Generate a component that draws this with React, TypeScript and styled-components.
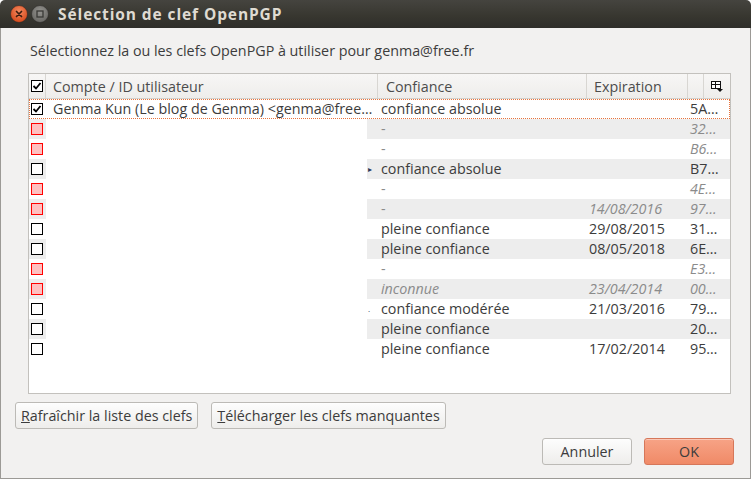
import React from 'react'
import styled, { createGlobalStyle } from 'styled-components'

const GlobalStyle = createGlobalStyle`
  html, body {
    margin: 0;
    padding: 0;
    background: #ffffff;
  }
  body {
    font-family: "Open Sans", "DejaVu Sans", sans-serif;
    font-size: 14.3px;
    color: #3c3c3c;
  }
`

const Window = styled.div`
  width: 751px;
  height: 479px;
  display: flex;
  flex-direction: column;
  border-radius: 5px 5px 0 0;
  overflow: hidden;
`

const TitleBar = styled.div`
  height: 28px;
  flex: none;
  display: flex;
  align-items: center;
  gap: 3px;
  padding-left: 10px;
  background: linear-gradient(#45443f, #37362f 60%, #2f2e2a);
`

const Title = styled.span`
  margin-left: 6px;
  font-weight: 700;
  color: #dfdbd2;
  font-size: 15.5px;
  letter-spacing: 0.9px;
`

const Content = styled.div`
  flex: 1;
  display: flex;
  flex-direction: column;
  background: #f2f1f0;
  border: 1px solid #9c9a96;
  border-top: none;
  padding: 13px 16px 13px 14px;
`

const Prompt = styled.div`
  height: 18px;
  box-sizing: border-box;
  padding-top: 1px;
  line-height: 18px;
  margin: 0 0 14px 15px;
`

const Table = styled.div`
  height: 321px;
  flex: none;
  box-sizing: border-box;
  margin: 0 3px 0 13px;
  border: 1px solid #c3c1bd;
  background: #ffffff;
  display: flex;
  flex-direction: column;
`

const HeaderRow = styled.div`
  height: 25px;
  flex: none;
  box-sizing: border-box;
  display: grid;
  grid-template-columns: 17px 332px 209px 101px 16px 1fr;
  background: linear-gradient(#f7f6f5, #eeedeb);
  border-bottom: 1px solid #d3d1cd;
  color: #4c4c4c;
`

const HeaderCell = styled.div<{ $pad?: number; $last?: boolean }>`
  display: flex;
  align-items: center;
  padding-left: ${(p) => p.$pad ?? 0}px;
  border-right: ${(p) => (p.$last ? 'none' : '1px solid #d8d6d2')};
  justify-content: ${(p) => (p.$last ? 'center' : 'flex-start')};
  white-space: nowrap;
  overflow: hidden;
`

const Row = styled.div<{ $alt: boolean; $focus?: boolean }>`
  height: 20px;
  flex: none;
  line-height: 20px;
  display: grid;
  grid-template-columns: 17px 332px 209px 101px 1fr;
  background: ${(p) => (p.$alt ? '#ededed' : '#ffffff')};
  outline: ${(p) => (p.$focus ? '1px dotted #e8733c' : 'none')};
  outline-offset: -1px;
`

const CheckCell = styled.div`
  display: flex;
  align-items: center;
  padding-left: 2px;
`

const Box = styled.div<{ $red?: boolean }>`
  width: 12px;
  height: 12px;
  box-sizing: border-box;
  border: 1px solid ${(p) => (p.$red ? '#ff0000' : '#000000')};
  background: ${(p) => (p.$red ? '#ffc0c0' : '#ffffff')};
  display: flex;
  align-items: center;
  justify-content: center;
`

const NameCell = styled.div`
  display: flex;
  white-space: nowrap;
  overflow: hidden;
`

const NameText = styled.span`
  padding-left: 7px;
  background: #ffffff;
`

const Blank = styled.div`
  width: 321px;
  flex: none;
  background: #ffffff;
`

const Mark = styled.span`
  margin-left: 1px;
  font-size: 8px;
  color: #2c3a5a;
`

const Cell = styled.div<{ $muted?: boolean; $italic?: boolean; $pad: number }>`
  padding-left: ${(p) => p.$pad}px;
  white-space: nowrap;
  overflow: hidden;
  color: ${(p) => (p.$muted ? '#8b8b8b' : '#3c3c3c')};
  font-style: ${(p) => (p.$italic ? 'italic' : 'normal')};
`

const ButtonRow = styled.div<{ $end?: boolean; $gap: number; $top: number }>`
  display: flex;
  gap: ${(p) => p.$gap}px;
  margin-top: ${(p) => p.$top}px;
  justify-content: ${(p) => (p.$end ? 'flex-end' : 'flex-start')};
`

const Button = styled.button<{ $width?: number; $primary?: boolean }>`
  height: 27px;
  ${(p) => (p.$width ? `width: ${p.$width}px;` : 'padding: 0 5px;')}
  font-family: inherit;
  font-size: 14.3px;
  color: #3c3c3c;
  border-radius: 3px;
  border: 1px solid ${(p) => (p.$primary ? '#d6775a' : '#bcbab6')};
  background: ${(p) =>
    p.$primary
      ? 'linear-gradient(#f7a386, #f08a67)'
      : 'linear-gradient(#fdfdfd, #eeedeb)'};
  box-shadow: inset 0 1px 0 rgba(255, 255, 255, 0.4);
  cursor: pointer;
`

const CloseButton = () => (
  <svg width="18" height="18" viewBox="0 0 18 18">
    <defs>
      <radialGradient id="cg" cx="50%" cy="35%" r="65%">
        <stop offset="0%" stopColor="#f58a60" />
        <stop offset="100%" stopColor="#d5481a" />
      </radialGradient>
    </defs>
    <circle cx="9" cy="9" r="8.5" fill="url(#cg)" stroke="#2a2926" strokeWidth="0.6" />
    <path d="M6.5 6.5 L11.5 11.5 M11.5 6.5 L6.5 11.5" stroke="#3b1d10" strokeWidth="1.7" strokeLinecap="round" />
  </svg>
)

const MinButton = () => (
  <svg width="18" height="18" viewBox="0 0 18 18">
    <defs>
      <radialGradient id="mg" cx="50%" cy="35%" r="65%">
        <stop offset="0%" stopColor="#94938f" />
        <stop offset="100%" stopColor="#686763" />
      </radialGradient>
    </defs>
    <circle cx="9" cy="9" r="8.5" fill="url(#mg)" stroke="#2a2926" strokeWidth="0.6" />
    <rect x="6" y="6" width="6" height="6" fill="none" stroke="#3a3936" strokeWidth="1.3" />
  </svg>
)

const Check = () => (
  <svg width="10" height="10" viewBox="0 0 10 10">
    <path d="M1.5 5 L4 7.5 L8.5 2" fill="none" stroke="#000" strokeWidth="1.8" />
  </svg>
)

const ColumnsIcon = () => (
  <svg width="12" height="11" viewBox="0 0 12 11">
    <rect x="0.5" y="0.5" width="9" height="7" fill="#fff" stroke="#111" />
    <path d="M0.5 3.5 H9.5 M4.5 0.5 V7.5" stroke="#111" />
    <path d="M6 8 H12 L9 11 Z" fill="#111" />
  </svg>
)

type Key = {
  red: boolean
  checked?: boolean
  name?: string
  mark?: string
  trust: string
  trustMuted?: boolean
  trustItalic?: boolean
  exp: string
  id: string
}

const keys: Key[] = [
  { red: false, checked: true, name: 'Genma Kun (Le blog de Genma) <genma@free…', trust: 'confiance absolue', exp: '', id: '5A…' },
  { red: true, trust: '-', trustMuted: true, exp: '', id: '32…' },
  { red: true, trust: '-', trustMuted: true, exp: '', id: 'B6…' },
  { red: false, mark: '▸', trust: 'confiance absolue', exp: '', id: 'B7…' },
  { red: true, trust: '-', trustMuted: true, exp: '', id: '4E…' },
  { red: true, trust: '-', trustMuted: true, exp: '14/08/2016', id: '97…' },
  { red: false, trust: 'pleine confiance', exp: '29/08/2015', id: '31…' },
  { red: false, trust: 'pleine confiance', exp: '08/05/2018', id: '6E…' },
  { red: true, trust: '-', trustMuted: true, exp: '', id: 'E3…' },
  { red: true, trust: 'inconnue', trustMuted: true, trustItalic: true, exp: '23/04/2014', id: '00…' },
  { red: false, mark: '.', trust: 'confiance modérée', exp: '21/03/2016', id: '79…' },
  { red: false, trust: 'pleine confiance', exp: '', id: '20…' },
  { red: false, trust: 'pleine confiance', exp: '17/02/2014', id: '95…' },
]

export default function App() {
  return (
    <>
      <GlobalStyle />
      <Window>
        <TitleBar>
          <CloseButton />
          <MinButton />
          <Title>Sélection de clef OpenPGP</Title>
        </TitleBar>
        <Content>
          <Prompt>Sélectionnez la ou les clefs OpenPGP à utiliser pour genma@free.fr</Prompt>
          <Table>
            <HeaderRow>
              <HeaderCell $pad={2}>
                <Box>
                  <Check />
                </Box>
              </HeaderCell>
              <HeaderCell $pad={7}>Compte / ID utilisateur</HeaderCell>
              <HeaderCell $pad={8}>Confiance</HeaderCell>
              <HeaderCell $pad={7}>Expiration</HeaderCell>
              <HeaderCell />
              <HeaderCell $last>
                <ColumnsIcon />
              </HeaderCell>
            </HeaderRow>
            {keys.map((k, i) => (
              <Row key={k.id} $alt={i % 2 === 1} $focus={i === 0}>
                <CheckCell>
                  <Box $red={k.red}>{k.checked && <Check />}</Box>
                </CheckCell>
                <NameCell>
                  {k.name ? (
                    <NameText>{k.name}</NameText>
                  ) : (
                    <>
                      <Blank />
                      {k.mark && <Mark>{k.mark}</Mark>}
                    </>
                  )}
                </NameCell>
                <Cell $pad={3} $muted={k.trustMuted} $italic={k.trustItalic}>
                  {k.trust}
                </Cell>
                <Cell $pad={2} $muted={k.red} $italic={k.red}>
                  {k.exp}
                </Cell>
                <Cell $pad={2} $muted={k.red} $italic={k.red}>
                  {k.id}
                </Cell>
              </Row>
            ))}
          </Table>
          <ButtonRow $gap={13} $top={8}>
            <Button>
              <u>R</u>afraîchir la liste des clefs
            </Button>
            <Button>
              <u>T</u>élécharger les clefs manquantes
            </Button>
          </ButtonRow>
          <ButtonRow $end $gap={12} $top={9}>
            <Button $width={90}>Annuler</Button>
            <Button $width={90} $primary>
              OK
            </Button>
          </ButtonRow>
        </Content>
      </Window>
    </>
  )
}
